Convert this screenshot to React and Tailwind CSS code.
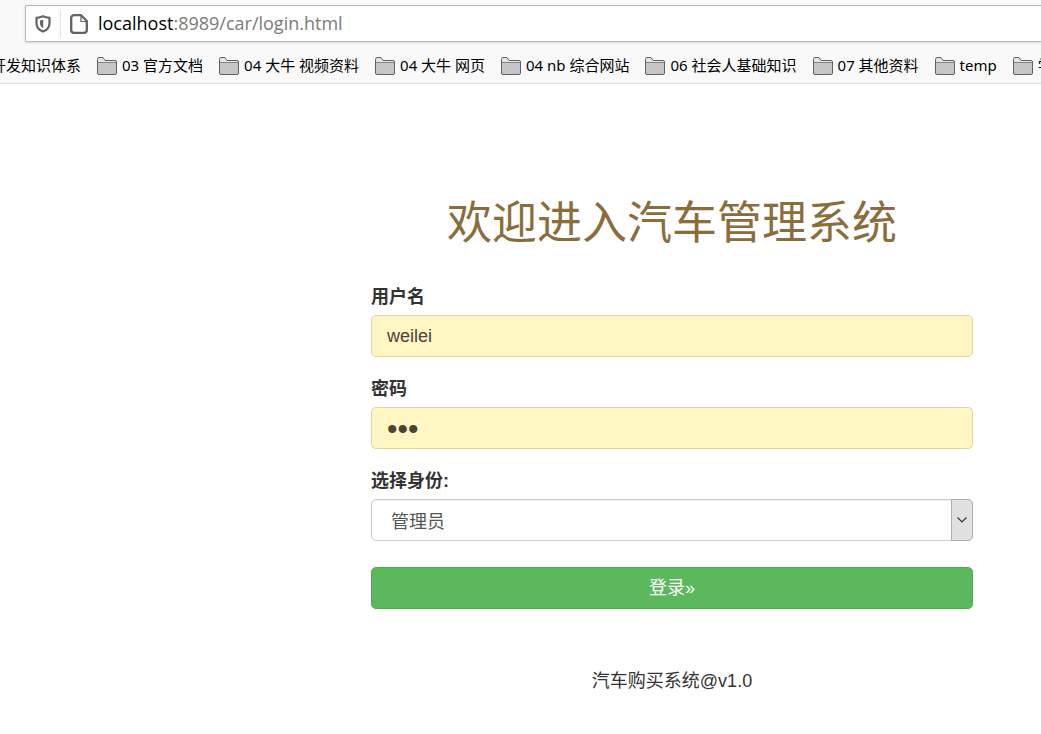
import React from "react";

const bookmarks = [
  { label: "开发知识体系", folder: false },
  { label: "03 官方文档", folder: true },
  { label: "04 大牛 视频资料", folder: true },
  { label: "04 大牛 网页", folder: true },
  { label: "04 nb 综合网站", folder: true },
  { label: "06 社会人基础知识", folder: true },
  { label: "07 其他资料", folder: true },
  { label: "temp", folder: true },
  { label: "学习", folder: true },
];

function ShieldIcon() {
  return (
    <svg width="16" height="18" viewBox="0 0 16 18" fill="none" aria-hidden="true">
      <path
        d="M8 1.300C6 2.200 4 2.600 1.500 2.800v5.400c0 4 2.500 6.800 6.500 8.400 4-1.600 6.500-4.400 6.500-8.400V2.800C12 2.600 10 2.200 8 1.300Z"
        stroke="#636363"
        strokeWidth="2.200"
        strokeLinejoin="round"
      />
      <path d="M8.200 4.800v8.400C6 11.900 5 10.300 5 8.200V5.500Z" fill="#636363" />
    </svg>
  );
}

function PageIcon() {
  return (
    <svg width="18" height="20" viewBox="0 0 18 20" fill="none" aria-hidden="true">
      <path
        d="M4 1.200h7l5.800 5.800v9a2.800 2.800 0 0 1-2.800 2.800H4A2.800 2.800 0 0 1 1.200 16V4A2.800 2.800 0 0 1 4 1.200Z"
        stroke="#636363"
        strokeWidth="2.300"
        strokeLinejoin="round"
      />
      <path d="M11 2v5.500h5.500" stroke="#636363" strokeWidth="1.200" />
    </svg>
  );
}

function FolderIcon() {
  return (
    <svg width="20" height="18" viewBox="0 0 20 18" className="shrink-0" aria-hidden="true">
      <path
        d="M.5 2.500q0-2 1.500-2h4l2 3h11.500v12.500q0 1.500-1.500 1.500H2q-1.500 0-1.500-1.500Z"
        fill="#e4e5e4"
      />
      <path d="M1 6h18v11H1Z" fill="#c6c6c8" />
      <path d="M1 5.500h18" stroke="#858585" />
      <path
        d="M.5 2.500q0-2 1.500-2h4l2 3h10q1.500 0 1.500 1.500v11q0 1.500-1.500 1.500H2q-1.500 0-1.500-1.500Z"
        fill="none"
        stroke="#606060"
      />
    </svg>
  );
}

function Field({ id, label, children }) {
  return (
    <div className="flex flex-col">
      <label htmlFor={id} className="mb-1.5 h-6 leading-6 font-bold">
        {label}
      </label>
      {children}
    </div>
  );
}

function BrowserBar() {
  return (
    <header className="border-b border-[#dedede] bg-[#f9f9fa] font-['Noto_Sans','Noto_Sans_CJK_SC',sans-serif] text-black">
      <div className="pt-[5px] pl-[25px]">
        <div className="flex h-[37px] items-center rounded-l-xs border border-r-0 border-[#b8b8b8] bg-white pl-[9px] shadow-sm">
          <ShieldIcon />
          <span className="mx-[9px] h-[26px] w-px bg-[#dedede]" />
          <PageIcon />
          <p className="ml-2.5 pb-0.5 font-['Open_Sans',sans-serif] text-lg whitespace-nowrap text-[#7a7a7a]">
            <span className="text-black">localhost</span>:8989/car/login.html
          </p>
        </div>
      </div>
      <nav className="overflow-hidden">
        <ul className="-ml-[9px] flex h-[41px] items-center gap-4 pt-1.5">
          {bookmarks.map((b) => (
            <li key={b.label} className="shrink-0">
              <a href="#" className="flex items-center gap-[5px] text-[15px] leading-5 whitespace-nowrap">
                {b.folder && <FolderIcon />}
                <span className="pb-0.5">{b.label}</span>
              </a>
            </li>
          ))}
        </ul>
      </nav>
    </header>
  );
}

export default function App() {
  return (
    <div className="min-h-screen overflow-hidden bg-white font-['Liberation_Sans','Noto_Sans_CJK_SC',sans-serif] text-[#333]">
      <BrowserBar />
      <main className="flex justify-center pl-[303px] text-[18px]">
        <form className="w-full max-w-[602px] pt-[115px]" onSubmit={(e) => e.preventDefault()}>
          <h1 className="mb-9 text-center text-[45px] leading-[50px] font-normal text-[#8a6d3b]">
            欢迎进入汽车管理系统
          </h1>
          <div className="flex flex-col gap-5">
            <Field id="username" label="用户名">
              <input
                id="username"
                type="text"
                defaultValue="weilei"
                className="h-[42px] w-full rounded-[5px] border border-[#e6d3a0] bg-[#fff6c4] px-[15px] text-[#4b4335] outline-none"
              />
            </Field>
            <Field id="password" label="密码">
              <input
                id="password"
                type="password"
                defaultValue="123"
                className="h-[42px] w-full rounded-[5px] border border-[#e6d3a0] bg-[#fff6c4] px-[15px] text-[30px] text-[#4b4335] outline-none"
              />
            </Field>
            <Field id="role" label="选择身份:">
              <div className="relative">
                <select
                  id="role"
                  className="h-[42px] w-full appearance-none rounded-[5px] border border-[#ccc] bg-white pt-1 pr-8 pl-[19px] text-[#555] inset-shadow-2xs outline-none"
                >
                  <option>管理员</option>
                  <option>普通用户</option>
                </select>
                <span className="pointer-events-none absolute inset-y-0 right-0 flex w-[22px] items-center justify-center rounded-r-[5px] border border-[#adadad] bg-[#e1e1e1]">
                  <svg width="10" height="6" viewBox="0 0 10 6" fill="none" aria-hidden="true">
                    <path d="m.5.5 4.500 4.500L9.500.5" stroke="#333" strokeWidth="1.200" />
                  </svg>
                </span>
              </div>
            </Field>
          </div>
          <button
            type="submit"
            className="mt-[26px] h-[42px] w-full rounded-[5px] border border-[#4cae4c] bg-[#5cb85c] text-white"
          >
            登录»
          </button>
          <p className="mt-[58px] text-center leading-7">汽车购买系统@v1.0</p>
        </form>
      </main>
    </div>
  );
}
